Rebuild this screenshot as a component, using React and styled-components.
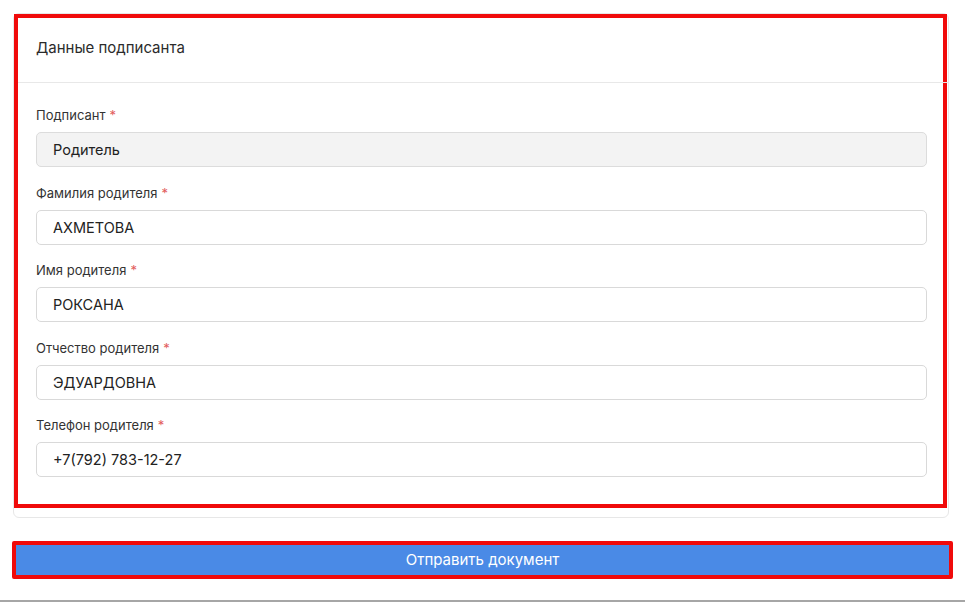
import React from 'react';
import styled, { createGlobalStyle } from 'styled-components';

const GlobalStyle = createGlobalStyle`
  html, body {
    margin: 0;
    padding: 0;
    background: #fff;
  }
  body {
    font-family: Inter, 'Noto Sans', Arial, sans-serif;
    color: #212529;
  }
`;

const Page = styled.div`
  height: 602px;
  display: flex;
  flex-direction: column;
  box-sizing: border-box;
  padding: 13px 16px 0 13px;
`;

const Card = styled.section`
  background: #fff;
  border: 1px solid #e7e7e7;
  border-radius: 6px;
  padding-bottom: 9px;
`;

// red outline around the signer block
const Highlight = styled.div`
  border: 4px solid #f00a0a;
  margin-right: 1px;
`;

const CardHeader = styled.header`
  box-sizing: border-box;
  height: 65px;
  display: flex;
  align-items: center;
  padding: 0 18px 5px;
  border-bottom: 1px solid #e8e8e8;
  margin-right: -5px;
  font-size: 15px;
  color: #2b2b2b;
`;

const CardBody = styled.div`
  display: flex;
  flex-direction: column;
  gap: 17.5px;
  padding: 24px 16px 26.5px 18px;
`;

const Field = styled.label`
  display: flex;
  flex-direction: column;
  gap: 8px;
`;

const LabelText = styled.span`
  font-size: 13px;
  line-height: 17px;
  color: #333;
`;

const Required = styled.span`
  color: #e25c5c;
  margin-left: 4px;
`;

const Input = styled.input`
  box-sizing: border-box;
  height: 35px;
  width: 100%;
  padding: 0 16px;
  border: 1px solid ${(p) => (p.readOnly ? '#dcdcdc' : '#d9d9d9')};
  border-radius: 5px;
  background: ${(p) => (p.readOnly ? '#f3f3f3' : '#fff')};
  font-family: inherit;
  font-size: 14.5px;
  color: #222;
  outline: none;
`;

const SubmitButton = styled.button`
  margin: 23px -4px 0 -1px;
  height: 38px;
  border: 4px solid #f00a0a;
  border-radius: 2px;
  background: #4a8ae6;
  color: #fff;
  font-family: inherit;
  font-size: 15px;
  cursor: pointer;
`;

const BottomBar = styled.div`
  margin: auto -16px 0 -13px;
  height: 2px;
  background: #a6a6a6;
`;

const fields = [
  { label: 'Подписант', value: 'Родитель', readOnly: true },
  { label: 'Фамилия родителя', value: 'АХМЕТОВА' },
  { label: 'Имя родителя', value: 'РОКСАНА' },
  { label: 'Отчество родителя', value: 'ЭДУАРДОВНА' },
  { label: 'Телефон родителя', value: '+7(792) 783-12-27' },
];

export default function App() {
  return (
    <>
      <GlobalStyle />
      <Page>
        <Card>
          <Highlight>
            <CardHeader>Данные подписанта</CardHeader>
            <CardBody>
              {fields.map((f) => (
                <Field key={f.label}>
                  <LabelText>
                    {f.label}
                    <Required>*</Required>
                  </LabelText>
                  <Input defaultValue={f.value} readOnly={f.readOnly} />
                </Field>
              ))}
            </CardBody>
          </Highlight>
        </Card>
        <SubmitButton type="button">Отправить документ</SubmitButton>
        <BottomBar />
      </Page>
    </>
  );
}
